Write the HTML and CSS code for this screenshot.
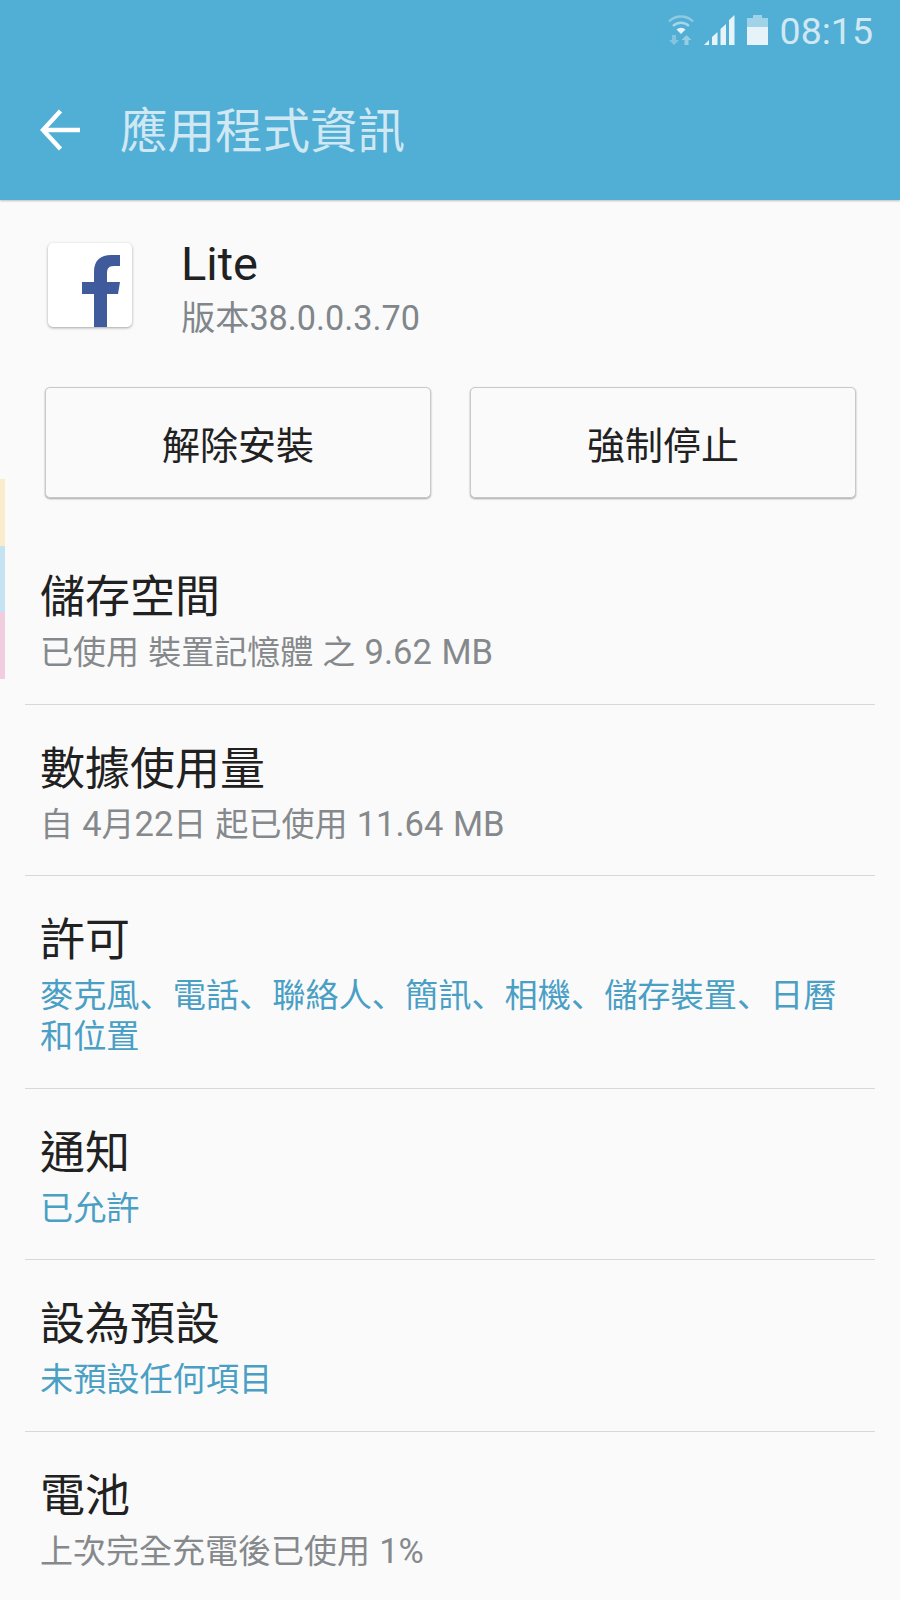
FILE: index.html
```html
<!DOCTYPE html>
<html>
<head>
  <meta charset="utf-8">
  <title>應用程式資訊</title>
  <link rel="stylesheet" href="styles.css">
</head>
<body>
  <header class="appbar">
    <div class="status">
      <svg class="wifi" width="26" height="31" viewBox="0 0 26 31">
        <path d="M1 7.500 A17 17 0 0 1 25 7.500" fill="none" stroke="#8fcae2" stroke-width="2.400"/>
        <path d="M5 12 A11.500 11.500 0 0 1 21 12" fill="none" stroke="#a6d6ea" stroke-width="2.400"/>
        <path d="M8.500 15.500 L13 20 L17.500 15.500 A6.500 6.500 0 0 0 8.500 15.500 Z" fill="#e6f3f9"/>
        <path d="M4 26 V21 H8 V26 H11 L6 31 L1 26 Z" fill="#84c4df"/>
        <path d="M13.500 26 L18.500 21 L23.500 26 H20.500 V31 H16.500 V26 Z" fill="#95cde4"/>
      </svg>
      <svg class="signal" width="31" height="30" viewBox="0 0 31 30">
        <path d="M0 30 L5 25 V30 Z" fill="#e6f3f9"/>
        <path d="M8 22 L13.500 17 V30 H8 Z" fill="#e6f3f9"/>
        <path d="M16.500 14 L22 9 V30 H16.500 Z" fill="#e6f3f9"/>
        <path d="M25 5 L30.500 0 V30 H25 Z" fill="#e6f3f9"/>
      </svg>
      <svg class="battery" width="21" height="30" viewBox="0 0 21 30">
        <path d="M6 0 H15 V3 H21 V30 H0 V3 H6 Z" fill="#a0d3e8"/>
        <rect y="12" width="21" height="18" fill="#e6f3f9"/>
      </svg>
      <span class="clock">08:15</span>
    </div>
    <div class="titlebar">
      <svg class="back" width="41" height="42" viewBox="0 0 41 42">
        <path d="M40 21 H4 M20.500 2 L3 21 L20.500 40" fill="none" stroke="#fff" stroke-width="4.500"/>
      </svg>
      <h1>應用程式資訊</h1>
    </div>
  </header>

  <div class="stripes">
    <span class="stripe-yellow"></span>
    <span class="stripe-blue"></span>
    <span class="stripe-pink"></span>
  </div>

  <section class="appinfo">
    <div class="appicon">
      <svg width="84" height="84" viewBox="0 0 84 84">
        <path d="M46 84 V51 H34 V39 H46 V29 C46 17 53 12 63 12 H72 V23 H66 C60 23 59 26 59 31 V39 H72 L70 51 H59 V84 Z" fill="#3f5b9b"/>
      </svg>
    </div>
    <div class="appname">
      <div class="name">Lite</div>
      <div class="version">版本38.0.0.3.70</div>
    </div>
  </section>

  <div class="buttons">
    <div class="btn">解除安裝</div>
    <div class="btn">強制停止</div>
  </div>

  <ul class="list">
    <li class="row">
      <div class="row-title">儲存空間</div>
      <div class="row-sub">已使用 裝置記憶體 之 <span class="num">9.62 MB</span></div>
    </li>
    <li class="row">
      <div class="row-title">數據使用量</div>
      <div class="row-sub">自 <span class="num">4</span>月<span class="num">22</span>日 起已使用 <span class="num">11.64 MB</span></div>
    </li>
    <li class="row">
      <div class="row-title">許可</div>
      <div class="row-sub link">麥克風、電話、聯絡人、簡訊、相機、儲存裝置、日曆和位置</div>
    </li>
    <li class="row">
      <div class="row-title">通知</div>
      <div class="row-sub link">已允許</div>
    </li>
    <li class="row">
      <div class="row-title">設為預設</div>
      <div class="row-sub link">未預設任何項目</div>
    </li>
    <li class="row">
      <div class="row-title">電池</div>
      <div class="row-sub">上次完全充電後已使用 <span class="num">1%</span></div>
    </li>
  </ul>
</body>
</html>
```

FILE: styles.css
```css
html, body {
  margin: 0;
  padding: 0;
}

body {
  position: relative;
  height: 1600px;
  overflow: hidden;
  background: #fafafa;
  font-family: Roboto, "Noto Sans CJK TC", sans-serif;
}

.appbar {
  height: 200px;
  background: #51aed5;
  box-shadow: 0 1px 2px rgba(0, 0, 0, 0.25);
}

.status {
  height: 98px;
  padding-right: 27px;
  display: flex;
  justify-content: flex-end;
  align-items: flex-start;
}

.wifi {
  margin-top: 14px;
  margin-right: 10px;
}

.signal {
  margin-top: 15px;
  margin-right: 12px;
}

.battery {
  margin-top: 15px;
  margin-right: 12px;
}

.clock {
  font-size: 37.500px;
  line-height: 36px;
  margin-top: 13px;
  color: #cfe8f3;
}

.titlebar {
  display: flex;
  align-items: center;
  height: 64px;
  padding-left: 40px;
}

h1 {
  margin: 4px 0 0 39px;
  font-size: 47.500px;
  font-weight: 400;
  line-height: 64px;
  color: #cfe8f3;
}

.stripes {
  position: absolute;
  left: 0;
  top: 479px;
  width: 5px;
  display: flex;
  flex-direction: column;
}

.stripes span {
  height: 66.500px;
}

.stripe-yellow {
  background: #fbeccb;
}

.stripe-blue {
  background: #c5e3f3;
}

.stripe-pink {
  background: #f2cde0;
}

.appinfo {
  display: flex;
  padding: 43px 0 0 48px;
  height: 144px;
}

.appicon {
  width: 84px;
  height: 84px;
  background: #fff;
  border-radius: 5px;
  box-shadow: 0 1px 3px rgba(0, 0, 0, 0.35);
}

.appname {
  margin-left: 49px;
  margin-top: -6px;
}

.name {
  font-size: 47px;
  line-height: 54px;
  color: #212121;
}

.version {
  font-size: 34.200px;
  line-height: 54px;
  color: #80868a;
}

.buttons {
  display: flex;
  gap: 39px;
  padding: 0 44px 0 45px;
}

.btn {
  flex: 1;
  height: 111px;
  padding-top: 9px;
  box-sizing: border-box;
  line-height: 99px;
  text-align: center;
  font-size: 38px;
  color: #212121;
  background: #fafafa;
  border: 1px solid #c9c9c9;
  border-radius: 5px;
  box-shadow: 0 1px 2px rgba(0, 0, 0, 0.35);
}

.list {
  list-style: none;
  margin: 35px 0 0;
  padding: 0 25px;
}

.row {
  padding: 37px 15px 30.500px;
  border-bottom: 1px solid #d8d8d8;
}

.row:last-child {
  border-bottom: none;
}

.row-title {
  font-size: 45px;
  line-height: 56px;
  color: #212121;
}

.row-sub {
  margin-top: 6px;
  font-size: 33px;
  line-height: 41px;
  word-spacing: 1px;
  color: #85898c;
}

.num {
  font-size: 34.500px;
}

.link {
  font-family: Roboto, "Noto Sans CJK SC", sans-serif;
  font-size: 33.200px;
  color: #4a9fc5;
}
```
